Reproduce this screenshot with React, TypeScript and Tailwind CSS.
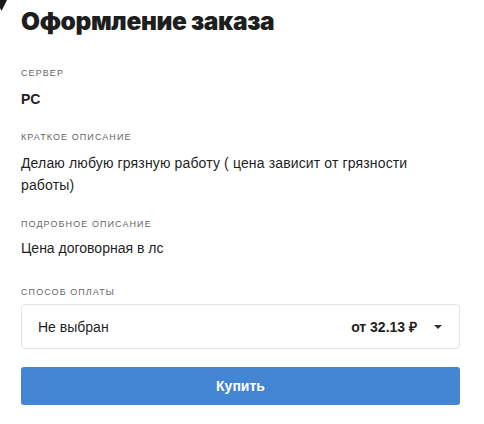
import React from 'react';

const labelCls = "text-[9px] tracking-[0.12em] uppercase text-[#666] leading-none";

export default function App() {
  return (
    <div className="relative w-[484px] h-[424px] bg-white font-['Liberation_Sans',Arial,sans-serif] text-[#1f1f1f] overflow-hidden">
      {/* cut-off corner mark */}
      <svg className="absolute left-0 top-0 w-3 h-3" viewBox="0 0 12 12">
        <path d="M0 0 L7 0 L1.5 11 L0 8 Z" fill="#1a1a1a" />
      </svg>

      <div className="px-[21px] w-[460px] box-content">
        <h1 className="pt-[3px] text-[24.5px] leading-[36px] font-black tracking-[-0.015em] font-['Inter',sans-serif] text-[#1e1e1e]">
          Оформление заказа
        </h1>

        <div className="mt-[30px]">
          <div className={labelCls}>Сервер</div>
          <div className="mt-[11px] text-sm font-bold leading-5">PC</div>
        </div>

        <div className="mt-[24px]">
          <div className={labelCls}>Краткое описание</div>
          <div className="mt-[10px] text-sm leading-[22px] pr-[30px] tracking-[0.01em]">
            Делаю любую грязную работу ( цена зависит от грязности работы)
          </div>
        </div>

        <div className="mt-[24px]">
          <div className={labelCls}>Подробное описание</div>
          <div className="mt-[9px] text-sm leading-5">Цена договорная в лс</div>
        </div>

        <div className="mt-[30px]">
          <div className={labelCls}>Способ оплаты</div>
          <div className="mt-[7px] h-[45px] w-[439px] border border-[#e3e3e3] rounded-[4px] flex items-center pl-[16px] pr-[16px]">
            <span className="text-sm flex-1">Не выбран</span>
            <span className="text-sm font-bold">от 32.13 ₽</span>
            <svg className="ml-[16px] w-[10px] h-[6px]" viewBox="0 0 10 6">
              <path d="M1 1 L9 1 L5 5 Z" fill="#333" />
            </svg>
          </div>
        </div>

        <button className="mt-[18px] h-[38px] w-[439px] rounded-[3px] bg-[#4384d3] text-white text-sm font-bold flex items-center justify-center">
          Купить
        </button>
      </div>
    </div>
  );
}
